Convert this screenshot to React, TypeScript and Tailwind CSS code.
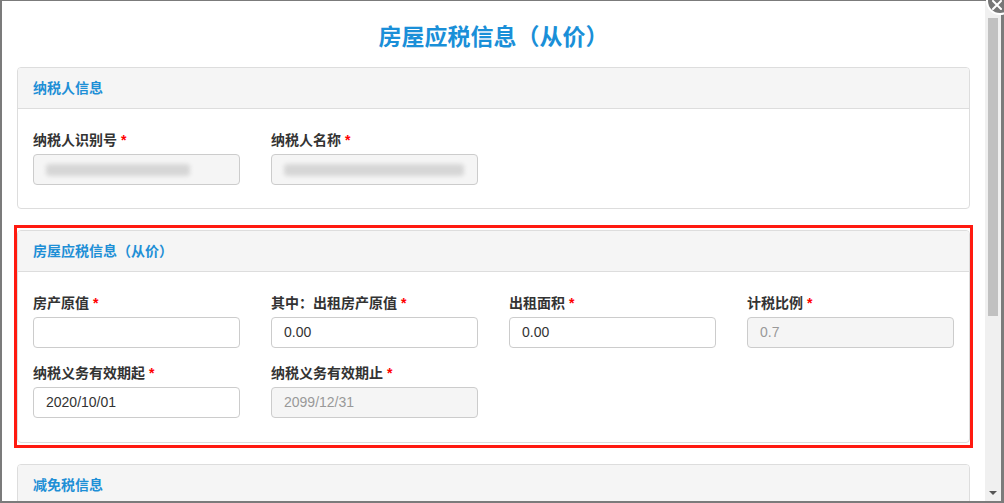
import type { ReactNode } from 'react';

const FONT = { fontFamily: '"Liberation Sans", "Noto Sans CJK SC", sans-serif' };

interface FieldProps {
  label: string;
  value?: string;
  disabled?: boolean;
  redacted?: number;
}

function Field({ label, value = '', disabled = false, redacted }: FieldProps) {
  return (
    <div className="flex flex-col">
      <div className="mb-[4px] flex h-[20px] items-center text-[14px] font-bold text-[#333]">
        {label}
        <span className="ml-[4px] text-[#ff0000]">*</span>
      </div>
      <div
        className={
          disabled
            ? 'flex h-[31px] items-center overflow-hidden rounded-[4px] border border-[#cccccc] bg-[#f5f5f5] pl-[12px] text-[14px] text-[#999]'
            : 'flex h-[31px] items-center overflow-hidden rounded-[4px] border border-[#cccccc] bg-white pl-[12px] text-[14px] text-[#333]'
        }
      >
        {redacted ? (
          <div
            className="h-[12px] rounded-sm bg-[#d6d6d6] blur-[2px]"
            style={{ width: redacted }}
          />
        ) : (
          value
        )}
      </div>
    </div>
  );
}

function Panel({ title, children }: { title: string; children?: ReactNode }) {
  return (
    <div className="overflow-hidden rounded-[4px] border border-[#dddddd] bg-white">
      <div className="flex h-[41px] items-center border-b border-[#dddddd] bg-[#f5f5f5] px-[15px] text-[14px] font-bold text-[#1e8fd6]">
        {title}
      </div>
      {children}
    </div>
  );
}

export default function App() {
  return (
    <div
      className="relative flex h-[503px] w-[1004px] overflow-hidden bg-[#7b7b7b] pt-px pb-[2px] pl-[2px] pr-[3px]"
      style={FONT}
    >
      <div className="flex flex-1 bg-white">
        <div className="flex-1 overflow-hidden">
          {/* Title */}
          <div className="flex h-[66px] items-center justify-center pt-[6px] text-[23px] font-bold text-[#1a8fd8]">
            房屋应税信息（从价）
          </div>

          <div className="flex flex-col gap-[16px] px-[15px]">
            <Panel title="纳税人信息">
              <div className="grid grid-cols-4 gap-x-[31px] px-[15px] pt-[21px] pb-[23px]">
                <Field label="纳税人识别号" disabled redacted={144} />
                <Field label="纳税人名称" disabled redacted={180} />
              </div>
            </Panel>

            <div className="mx-[-3px] border-[3px] border-[#ff1a10] pt-[2px] pb-[2px]">
              <Panel title="房屋应税信息（从价）">
                <div className="grid grid-cols-4 gap-x-[31px] gap-y-[15px] px-[15px] pt-[21px] pb-[24px]">
                  <Field label="房产原值" />
                  <Field label="其中：出租房产原值" value="0.00" />
                  <Field label="出租面积" value="0.00" />
                  <Field label="计税比例" value="0.7" disabled />
                  <Field label="纳税义务有效期起" value="2020/10/01" />
                  <Field label="纳税义务有效期止" value="2099/12/31" disabled />
                </div>
              </Panel>
            </div>

            <Panel title="减免税信息">
              <div className="h-[60px]" />
            </Panel>
          </div>
        </div>

        {/* Scrollbar */}
        <div className="relative flex w-[16px] flex-col bg-[#f0f0f0]">
          <div className="mx-[3px] mt-[17px] h-[298px] bg-[#c1c1c1]" />
          <div className="absolute bottom-[6px] left-[4px] h-0 w-0 border-x-[4px] border-t-[4px] border-x-transparent border-t-[#555]" />
        </div>
      </div>

      {/* Close button */}
      <div className="absolute right-[-10px] top-[-13px] flex h-[28px] w-[28px] items-center justify-center rounded-full border-2 border-white bg-[#777]">
        <svg width="12" height="12" viewBox="0 0 12 12" className="ml-[-6px] mt-[8px]">
          <path d="M2 2 L10 10 M10 2 L2 10" stroke="white" strokeWidth="2" strokeLinecap="round" />
        </svg>
      </div>
    </div>
  );
}
